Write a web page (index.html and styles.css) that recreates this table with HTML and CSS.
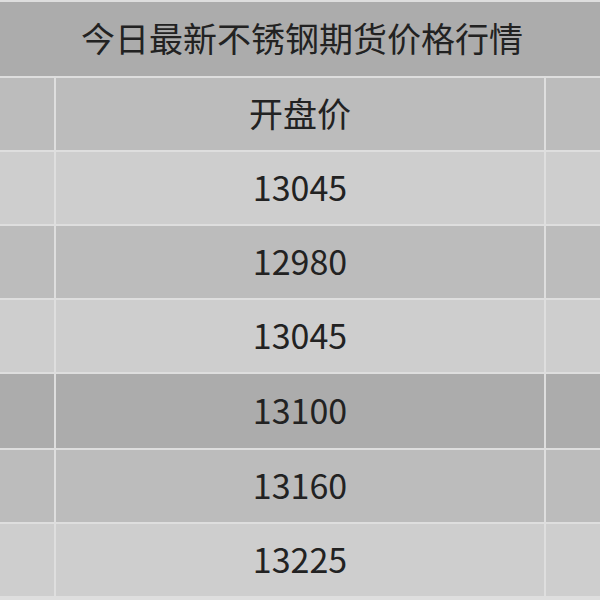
FILE: index.html
```html
<!DOCTYPE html>
<html lang="zh-CN">
<head>
<meta charset="utf-8">
<title>今日最新不锈钢期货价格行情</title>
<link rel="stylesheet" href="styles.css">
</head>
<body>
<div class="sheet">
  <div class="cell title">今日最新不锈钢期货价格行情</div>
  <div class="cell head side"></div>
  <div class="cell head">开盘价</div>
  <div class="cell head side"></div>

  <div class="cell light side"></div>
  <div class="cell light">13045</div>
  <div class="cell light side"></div>

  <div class="cell mid side"></div>
  <div class="cell mid">12980</div>
  <div class="cell mid side"></div>

  <div class="cell light side"></div>
  <div class="cell light">13045</div>
  <div class="cell light side"></div>

  <div class="cell dark side"></div>
  <div class="cell dark">13100</div>
  <div class="cell dark side"></div>

  <div class="cell mid side"></div>
  <div class="cell mid">13160</div>
  <div class="cell mid side"></div>

  <div class="cell light side"></div>
  <div class="cell light">13225</div>
  <div class="cell light side"></div>
</div>
</body>
</html>
```
FILE: styles.css
```css
html, body {
  margin: 0;
  padding: 0;
  background: #dedede;
  overflow: hidden;
}
.sheet {
  width: 600px;
  height: 600px;
  box-sizing: border-box;
  padding-top: 2px;
  background: #dedede;
  display: grid;
  grid-template-columns: 54px 488px 54px;
  grid-template-rows: 74px 72px 72px 72px 72px 74px 72px 72px;
  column-gap: 2px;
  row-gap: 2px;
  align-content: start;
  font-family: "Noto Sans CJK SC", "Noto Sans", sans-serif;
  color: #222222;
}
.cell {
  display: flex;
  align-items: center;
  justify-content: center;
  font-size: 34px;
  line-height: 1;
  padding-bottom: 3px;
}
.title {
  grid-column: 1 / -1;
  background: #acacac;
  font-size: 34px;
  margin-right: -4px;
}
.head { background: #bcbcbc; }
.light { background: #cecece; }
.mid { background: #bcbcbc; }
.dark { background: #acacac; }
.side { }
```
